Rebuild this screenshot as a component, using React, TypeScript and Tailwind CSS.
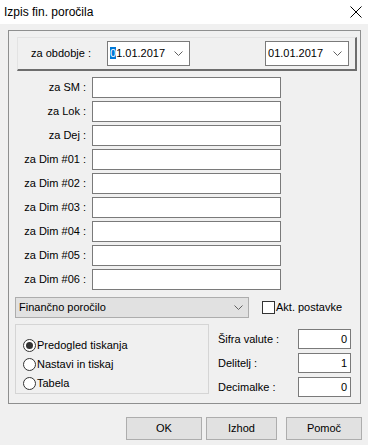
import type { ReactNode } from "react";

const fieldLabels = [
  "za SM :",
  "za Lok :",
  "za Dej :",
  "za Dim #01 :",
  "za Dim #02 :",
  "za Dim #03 :",
  "za Dim #04 :",
  "za Dim #05 :",
  "za Dim #06 :",
];

function Chevron() {
  return (
    <svg width="9" height="5" viewBox="0 0 9 5" className="shrink-0">
      <path d="M0.5 0.5 L4.5 4.5 L8.5 0.5" fill="none" stroke="#606060" strokeWidth="1" />
    </svg>
  );
}

function DatePicker({ highlight }: { highlight?: boolean }) {
  return (
    <div className="flex h-[25px] items-center justify-between border border-[#7a7a7a] bg-white pl-[2px] pr-[6px]">
      <span>
        {highlight ? <span className="bg-[#0078d7] text-white">0</span> : "0"}
        1.01.2017
      </span>
      <Chevron />
    </div>
  );
}

function Radio({ checked, children }: { checked?: boolean; children: ReactNode }) {
  return (
    <div className="flex h-[19px] items-center gap-[1px]">
      <span className="flex h-[13px] w-[13px] items-center justify-center rounded-full border border-[#333333] bg-white">
        {checked ? <span className="h-[7px] w-[7px] rounded-full bg-[#333333]" /> : null}
      </span>
      <span>{children}</span>
    </div>
  );
}

function Button({ label, width }: { label: string; width: string }) {
  return (
    <div className={`flex h-[23px] items-center justify-center border border-[#adadad] bg-[#e1e1e1] ${width}`}>
      {label}
    </div>
  );
}

export default function App() {
  return (
    <div className="flex h-[445px] w-[368px] flex-col bg-[#f0f0f0] font-['Liberation_Sans',Arial,sans-serif] text-[11px] text-black">
      <div className="flex h-[24px] items-center justify-between bg-white pl-[4px] pr-[6px] text-[12px]">
        <span>Izpis fin. poročila</span>
        <svg width="12" height="12" viewBox="0 0 12 12">
          <path d="M0.5 0.5 L11.5 11.5 M11.5 0.5 L0.5 11.5" stroke="#000" strokeWidth="1" />
        </svg>
      </div>

      <div className="ml-[8px] mt-[6px] flex w-[353px] flex-col border border-[#8e8f8f] pb-[6px]">
        <div className="ml-[8px] mt-[6px] flex h-[34px] w-[340px] items-center border-b-2 border-l border-r-2 border-t border-b-[#6d6d6d] border-l-[#e3e3e3] border-r-[#6d6d6d] border-t-[#e3e3e3] pl-[13px] pr-[6px]">
          <span className="w-[76px]">za obdobje :</span>
          <div className="w-[83px]">
            <DatePicker highlight />
          </div>
          <div className="flex-1" />
          <div className="w-[84px]">
            <DatePicker />
          </div>
        </div>

        <div className="mt-[6px] flex flex-col gap-[3px]">
          {fieldLabels.map((label) => (
            <div key={label} className="flex h-[21px] items-center">
              <span className="w-[77px] text-right">{label}</span>
              <div className="ml-[6px] h-[21px] w-[189px] border border-[#7a7a7a] bg-white" />
            </div>
          ))}
        </div>

        <div className="mt-[7px] flex h-[21px] items-center">
          <div className="ml-[6px] flex h-[21px] w-[234px] items-center justify-between border border-[#adadad] bg-[#e1e1e1] pl-[3px] pr-[5px]">
            <span>Finančno poročilo</span>
            <Chevron />
          </div>
          <span className="ml-[13px] h-[13px] w-[13px] border border-[#333333] bg-white" />
          <span className="ml-[1px]">Akt. postavke</span>
        </div>

        <div className="mt-[6px] flex">
          <div className="ml-[6px] flex h-[70px] w-[194px] flex-col border border-[#d5d5d5] pl-[7px] pt-[11px]">
            <Radio checked>Predogled tiskanja</Radio>
            <Radio>Nastavi in tiskaj</Radio>
            <Radio>Tabela</Radio>
          </div>
          <div className="ml-[9px] mt-[5px] flex w-[133px] flex-col gap-[4px]">
            {[
              ["Šifra valute :", "0"],
              ["Delitelj :", "1"],
              ["Decimalke :", "0"],
            ].map(([label, value]) => (
              <div key={label} className="flex h-[20px] items-center">
                <span className="flex-1">{label}</span>
                <div className="flex h-[20px] w-[53px] items-center justify-end border border-[#7a7a7a] bg-white pr-[3px]">
                  {value}
                </div>
              </div>
            ))}
          </div>
        </div>
      </div>

      <div className="ml-[126px] mt-[13px] flex">
        <Button label="OK" width="w-[76px]" />
        <div className="ml-[4px]">
          <Button label="Izhod" width="w-[71px]" />
        </div>
        <div className="ml-[9px]">
          <Button label="Pomoč" width="w-[76px]" />
        </div>
      </div>
    </div>
  );
}
